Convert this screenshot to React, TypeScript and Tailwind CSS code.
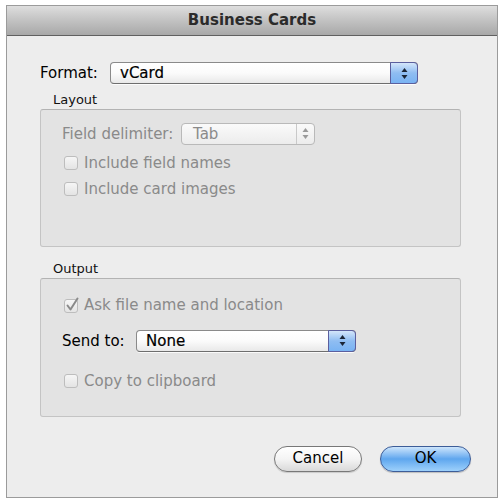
import React from 'react';

type PopUpProps = {
  value: string;
  width: string;
  disabled?: boolean;
};

function Arrows({ color }: { color: string }) {
  return (
    <svg width="7" height="13" viewBox="0 0 7 13">
      <path d="M3.5 1 L6.5 5 L0.5 5 Z" fill={color} />
      <path d="M3.5 12 L6.5 8 L0.5 8 Z" fill={color} />
    </svg>
  );
}

function PopUp({ value, width, disabled }: PopUpProps) {
  if (disabled) {
    return (
      <div className={`flex h-[22px] ${width} rounded-[4px] border border-[#b9b9b9] bg-gradient-to-b from-[#fafafa] to-[#ececec]`}>
        <span className="flex flex-1 items-center pl-[11px] text-[15px] text-[#8a8a8a]">{value}</span>
        <span className="flex w-[18px] items-center justify-center border-l border-[#c9c9c9]">
          <Arrows color="#9a9a9a" />
        </span>
      </div>
    );
  }
  return (
    <div className={`flex h-[22px] ${width} rounded-[4px] border border-[#8a8a8a] border-b-[#6e6e6e] bg-gradient-to-b from-white via-[#fbfbfb] to-[#e9e9e9] shadow-[0_1px_0_rgba(255,255,255,0.8)]`}>
      <span className="flex flex-1 items-center pl-[9px] text-[15px] text-black [-webkit-text-stroke:0.2px_#000]">{value}</span>
      <span className="-my-px -mr-px flex w-[28px] items-center justify-center rounded-r-[4px] border border-[#5b5f9e] bg-gradient-to-b from-[#d4e6fa] via-[#8fbdf2] to-[#79b3f3]">
        <Arrows color="#1b2536" />
      </span>
    </div>
  );
}

function CheckBox({ label, checked }: { label: string; checked?: boolean }) {
  return (
    <div className="flex h-[26px] items-center">
      <span className="relative ml-[2px] h-[14px] w-[14px] rounded-[3px] border border-[#bdbdbd] bg-gradient-to-b from-[#f6f6f6] to-[#e4e4e4]">
        {checked && (
          <svg className="absolute -top-[3px] left-[1px]" width="13" height="15" viewBox="0 0 13 15">
            <path d="M1.5 8.5 L4.5 12.5 L11.5 1.5" fill="none" stroke="#8a8a8a" strokeWidth="2" strokeLinecap="round" strokeLinejoin="round" />
          </svg>
        )}
      </span>
      <span className="ml-[6px] text-[15px] text-[#8a8a8a]">{label}</span>
    </div>
  );
}

function GroupLabel({ children }: { children: React.ReactNode }) {
  return <div className="ml-[46px] h-[16px] text-[13px] leading-[16px] text-[#111]">{children}</div>;
}

function Group({ height, children }: { height: string; children: React.ReactNode }) {
  return (
    <div className={`ml-[33px] mt-[1px] ${height} w-[421px] rounded-[3px] border border-[#c4c4c4] border-t-[#b3b3b3] bg-[#e3e3e3] pl-[21px]`}>
      {children}
    </div>
  );
}

export default function App() {
  return (
    <div className="h-[503px] w-[504px] bg-white pl-[6px] pt-[5px] font-['DejaVu_Sans',sans-serif]">
      <div className="flex h-[493px] w-[492px] flex-col border border-[#9b9b9b] bg-[#ededed]">
        <div className="flex h-[30px] items-center justify-center border-b border-[#606060] bg-gradient-to-b from-[#dedede] via-[#c2c2c2] to-[#a8a8a8]">
          <span className="text-[15px] font-bold text-[#2b2b2b]">Business Cards</span>
        </div>

        <div className="ml-[33px] mt-[26px] flex items-center">
          <span className="w-[70px] text-[15px] text-black">Format:</span>
          <PopUp value="vCard" width="w-[308px]" />
        </div>

        <div className="mt-[7px]">
          <GroupLabel>Layout</GroupLabel>
        </div>
        <Group height="h-[138px]">
          <div className="mt-[13px] flex items-center">
            <span className="w-[119px] text-[15px] text-[#8a8a8a]">Field delimiter:</span>
            <PopUp value="Tab" width="w-[134px]" disabled />
          </div>
          <div className="mt-[5px]">
            <CheckBox label="Include field names" />
            <CheckBox label="Include card images" />
          </div>
        </Group>

        <div className="mt-[14px]">
          <GroupLabel>Output</GroupLabel>
        </div>
        <Group height="h-[139px]">
          <div className="mt-[14px]">
            <CheckBox label="Ask file name and location" checked />
          </div>
          <div className="mt-[11px] flex items-center">
            <span className="w-[74px] text-[15px] text-black">Send to:</span>
            <PopUp value="None" width="w-[220px]" />
          </div>
          <div className="mt-[16px]">
            <CheckBox label="Copy to clipboard" />
          </div>
        </Group>

        <div className="mr-[26px] mt-[29px] flex justify-end gap-[18px]">
          <button className="h-[26px] w-[88px] rounded-full border border-[#787878] bg-gradient-to-b from-white via-[#f4f4f4] to-[#d9d9d9] text-[15px] text-black shadow-[0_1px_1px_rgba(0,0,0,0.15)]">
            Cancel
          </button>
          <button className="h-[26px] w-[91px] rounded-full border border-[#3d5d98] bg-gradient-to-b from-[#cde5fb] via-[#5ea6ee] to-[#9dd0fb] text-[15px] text-black shadow-[0_1px_1px_rgba(0,0,0,0.2)]">
            OK
          </button>
        </div>
      </div>
    </div>
  );
}
